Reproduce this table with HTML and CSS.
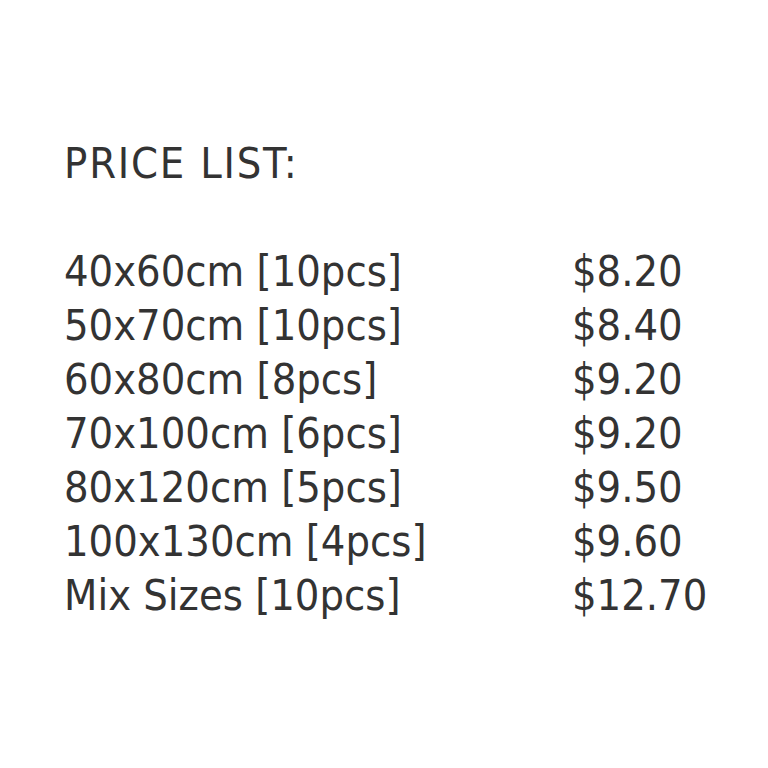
FILE: index.html
```html
<!DOCTYPE html>
<html>
<head>
<meta charset="utf-8">
<link rel="stylesheet" href="styles.css">
</head>
<body>
<div class="page">
  <h1 class="title">PRICE LIST:</h1>
  <div class="list">
    <span class="size">40x60cm [10pcs]</span><span class="price">$8.20</span>
    <span class="size">50x70cm [10pcs]</span><span class="price">$8.40</span>
    <span class="size">60x80cm [8pcs]</span><span class="price">$9.20</span>
    <span class="size">70x100cm [6pcs]</span><span class="price">$9.20</span>
    <span class="size">80x120cm [5pcs]</span><span class="price">$9.50</span>
    <span class="size">100x130cm [4pcs]</span><span class="price">$9.60</span>
    <span class="size">Mix Sizes [10pcs]</span><span class="price">$12.70</span>
  </div>
</div>
</body>
</html>
```
FILE: styles.css
```css
html, body {
  margin: 0;
  padding: 0;
  background: #ffffff;
}
.page {
  width: 768px;
  height: 768px;
  box-sizing: border-box;
  padding: 136px 0 0 64px;
  font-family: "DejaVu Sans Condensed", "DejaVu Sans", sans-serif;
  font-size: 43px;
  line-height: 54px;
  color: #333333;
}
.title {
  margin: 0 0 54px 0;
  font-size: inherit;
  font-weight: normal;
  line-height: 54px;
  letter-spacing: 1.8px;
}
.list {
  display: grid;
  grid-template-columns: 508px auto;
}
```
